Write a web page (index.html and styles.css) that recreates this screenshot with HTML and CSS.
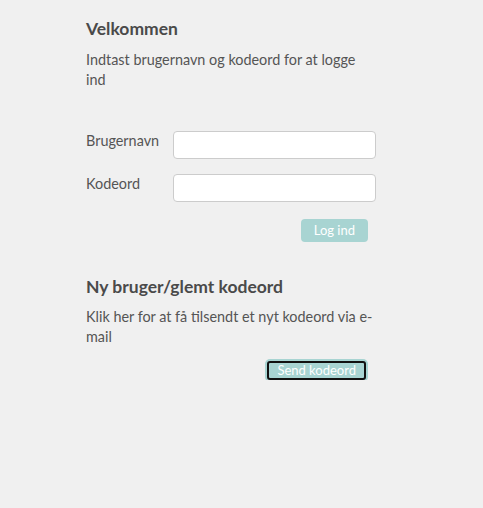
FILE: index.html
```html
<!DOCTYPE html>
<html lang="da">
<head>
<meta charset="utf-8">
<title>Log ind</title>
<link rel="stylesheet" href="styles.css">
</head>
<body>
<main class="page">
  <section class="block">
    <h1 class="title">Velkommen</h1>
    <p class="text">Indtast brugernavn og kodeord for at logge ind</p>
    <form class="form">
      <div class="row">
        <label class="label" for="u">Brugernavn</label>
        <input class="field" id="u" type="text">
      </div>
      <div class="row">
        <label class="label" for="p">Kodeord</label>
        <input class="field" id="p" type="password">
      </div>
      <div class="actions">
        <button type="button" class="btn">Log ind</button>
      </div>
    </form>
  </section>
  <section class="block second">
    <h2 class="title">Ny bruger/glemt kodeord</h2>
    <p class="text">Klik her for at få tilsendt et nyt kodeord via e-mail</p>
    <div class="actions">
      <button type="button" class="btn focused">Send kodeord</button>
    </div>
  </section>
</main>
</body>
</html>
```

FILE: styles.css
```css
html, body {
  margin: 0;
  padding: 0;
  background: #f0f0f0;
}
body {
  font-family: Lato, "Open Sans", sans-serif;
  color: #555555;
}
.page {
  width: 290px;
  padding: 18px 0 0 86px;
}
.title {
  margin: 0;
  font-size: 17.5px;
  line-height: 22px;
  font-weight: 700;
  color: #4a4a4a;
}
.text {
  margin: 10px 0 0;
  font-size: 14.4px;
  line-height: 20px;
  width: 290px;
}
.form {
  margin-top: 41px;
  display: flex;
  flex-direction: column;
  gap: 15px;
}
.row {
  display: grid;
  grid-template-columns: 87px 203px;
  align-items: start;
}
.label {
  font-size: 14.4px;
  line-height: 20px;
}
.field {
  box-sizing: border-box;
  width: 203px;
  height: 28px;
  margin: 0;
  border: 1px solid #cccccc;
  border-radius: 4px;
  background: #ffffff;
}
.actions {
  display: flex;
  justify-content: flex-end;
  padding-right: 8px;
}
.form .actions {
  margin-top: 2px;
}
.btn {
  box-sizing: border-box;
  height: 23px;
  padding: 0 13px;
  border: none;
  border-radius: 4px;
  background: #a8d4d2;
  color: #ffffff;
  font-family: Lato, "Open Sans", sans-serif;
  font-size: 13px;
  line-height: 23px;
}
.second {
  margin-top: 34px;
}
.second .text {
  margin-top: 9px;
}
.second .actions {
  margin-top: 14px;
  padding-right: 10px;
}
.focused {
  height: 19px;
  line-height: 15px;
  padding: 0 8px;
  border: 2px solid #111111;
  border-radius: 3px;
  box-shadow: 0 0 0 2px #a8d4d2;
}
```
